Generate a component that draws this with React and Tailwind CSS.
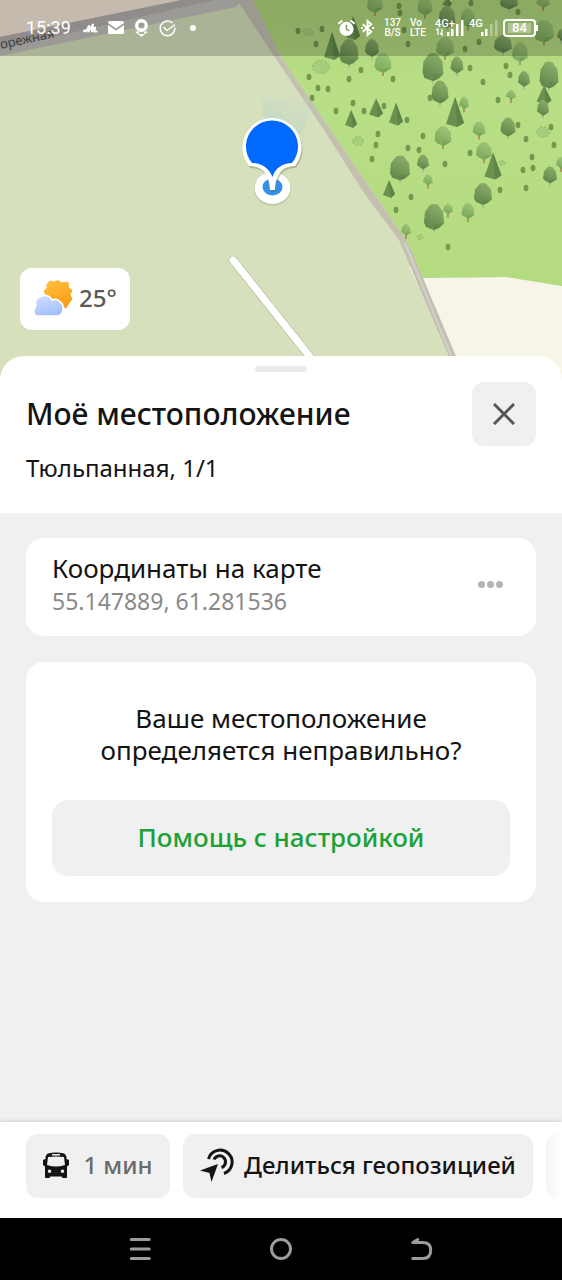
import React from 'react';

// x, y (centre), width, height, kind
const trees = [
  [375, 3, 16, 20, 'light'], [425, 6, 15, 19, 'light'], [447, 3, 10, 9, 'cone'], [447, 17, 17, 22, 'dark'],
  [468, 18, 15, 19, 'light'], [509, 1, 18, 17, 'dark'], [543, 1, 13, 14, 'light'], [544, 31, 20, 23, 'light'],
  [561, 35, 8, 12, 'dark'], [353, 28, 14, 24, 'cone'], [332, 46, 16, 28, 'cone'], [349, 52, 19, 26, 'dark'],
  [372, 48, 14, 18, 'dark'], [383, 63, 17, 20, 'light'], [445, 47, 18, 20, 'light'], [433, 67, 21, 28, 'dark'],
  [457, 65, 13, 17, 'dark'], [440, 92, 17, 23, 'dark'], [464, 103, 10, 13, 'light'], [455, 112, 18, 30, 'cone'],
  [503, 44, 18, 18, 'dark'], [520, 52, 16, 20, 'light'], [524, 79, 12, 16, 'dark'], [544, 95, 15, 19, 'cone'],
  [549, 75, 19, 27, 'dark'], [543, 108, 12, 16, 'dark'], [511, 95, 10, 10, 'light'], [508, 127, 15, 19, 'dark'],
  [479, 129, 13, 15, 'light'], [443, 136, 17, 20, 'light'], [376, 108, 14, 19, 'cone'], [351, 119, 12, 18, 'cone'],
  [396, 114, 14, 23, 'cone'], [484, 151, 16, 18, 'light'], [400, 168, 20, 25, 'dark'], [423, 162, 12, 15, 'dark'],
  [428, 180, 10, 11, 'light'], [389, 189, 12, 18, 'cone'], [493, 166, 17, 27, 'cone'], [550, 175, 14, 17, 'dark'],
  [561, 163, 10, 12, 'light'], [483, 194, 18, 22, 'dark'], [468, 211, 13, 16, 'light'], [448, 209, 10, 11, 'light'],
  [434, 217, 20, 26, 'dark'], [406, 230, 10, 12, 'light'],
];

const bushes = [
  [399, 6], [400, 13], [471, 3], [518, 12], [298, 31], [322, 29], [316, 44], [404, 30], [408, 44], [361, 70],
  [393, 79], [349, 79], [309, 77], [318, 88], [328, 89], [312, 98], [353, 103], [364, 111], [384, 106], [336, 111],
  [407, 120], [470, 68], [465, 49], [479, 42], [483, 82], [430, 98], [506, 66], [510, 75], [498, 100], [518, 125],
  [551, 127], [526, 139], [554, 145], [378, 134], [376, 145], [423, 136], [408, 148], [419, 150], [372, 159], [445, 164],
  [470, 153], [411, 197], [396, 210], [532, 157], [533, 168], [523, 170], [526, 188], [500, 190], [448, 247],
];

const scrubs = [[321, 67, 17], [308, 32, 9], [358, 141, 11], [543, 132, 13], [502, 163, 6], [420, 237, 6]];

const Tree = ({ x, y, w, h, kind }) => {
  const l = x - w / 2;
  const r = x + w / 2;
  const t = y - h / 2;
  const b = y + h / 2;
  if (kind === 'cone') {
    return (
      <g>
        <path d={`M${x} ${t}L${r} ${b - 4}L${x + 2} ${b}L${l} ${b - 3}Z`} fill="#6a9150" />
        <path d={`M${x} ${t}L${r} ${b - 4}L${x + 2} ${b}Z`} fill="#5e8548" />
      </g>
    );
  }
  return (
    <g>
      <path d={`M${x} ${b - 2}V${b + 3}`} stroke={kind === 'light' ? '#aa7448' : '#9fb895'} strokeWidth="1.3" />
      <path
        d={`M${x - w / 5} ${t + 1}Q${x} ${t - 1} ${x + w / 5} ${t + 1}L${r - 1} ${y - h / 5}L${r} ${y + h / 4}L${x + w / 4} ${b - 2}L${x} ${b}L${l + 2} ${b - 3}L${l} ${y + h / 5}L${l + 1} ${y - h / 5}Z`}
        fill={kind === 'light' ? 'url(#treeLight)' : 'url(#treeDark)'}
      />
      <path d={`M${x} ${y + h / 4}L${r} ${y + h / 4}L${x + w / 4} ${b - 2}L${x} ${b}Z`} fill="#3f6b32" opacity=".15" />
    </g>
  );
};

const MapView = () => (
  <svg className="block h-full w-full" viewBox="0 0 562 380" preserveAspectRatio="xMidYMin slice" aria-hidden="true">
    <defs>
      <linearGradient id="treeDark" x1=".7" y1="0" x2=".3" y2="1">
        <stop offset="0" stopColor="#8cb068" />
        <stop offset="1" stopColor="#5f844b" />
      </linearGradient>
      <linearGradient id="treeLight" x1=".7" y1="0" x2=".3" y2="1">
        <stop offset="0" stopColor="#9dc677" />
        <stop offset="1" stopColor="#7ba75c" />
      </linearGradient>
      <linearGradient id="beam" x1="0" y1="1" x2=".3" y2="0">
        <stop offset="0" stopColor="#6db3de" stopOpacity=".75" />
        <stop offset="1" stopColor="#a9d0d4" stopOpacity=".1" />
      </linearGradient>
      <linearGradient id="meadow" x1="0" y1="0" x2="0" y2="1">
        <stop offset="0" stopColor="#aed479" />
        <stop offset=".3" stopColor="#b9df86" />
        <stop offset="1" stopColor="#b4db80" />
      </linearGradient>
      <clipPath id="wood">
        <path d="M252 0L281 57L344 150L408 243L420 278L506 277L562 286V0Z" />
      </clipPath>
    </defs>
    <rect width="562" height="380" fill="#d6e0bd" />
    <path d="M0 0H182L0 38Z" fill="#f5eada" />
    <path d="M0 37L182 0H241L236 7L0 56Z" fill="#c3c1bd" />
    <path d="M0 37L182 0H215L0 49Z" fill="#b3b0ae" />
    <text x="1" y="49" transform="rotate(-12 1 49)" fontFamily="Noto Sans, sans-serif" fontSize="13" fill="#555351">
      орежная
    </text>
    <path d="M408 265L420 278L506 277L562 286V380H466Z" fill="#f7f4e8" />
    <path d="M252 0L281 57L344 150L408 243L420 278L506 277L562 286V0Z" fill="url(#meadow)" />
    <g clipPath="url(#wood)">
      {bushes.map(([x, y]) => (
        <ellipse key={`${x}-${y}`} cx={x} cy={y} rx="2.4" ry="3.2" fill="#73994f" />
      ))}
      {scrubs.map(([x, y, w]) => (
        <ellipse key={`${x}-${y}`} cx={x} cy={y} rx={w / 2} ry={w * 0.4} fill="#a6cd7c" stroke="#8fb668" strokeDasharray="2 2" />
      ))}
      {trees.map(([x, y, w, h, kind]) => (
        <Tree key={`${x}-${y}`} x={x} y={y} w={w} h={h} kind={kind} />
      ))}
    </g>
    <path d="M237 0H253L281 57L344 150L408 243L423 278L466 380H459L399 240L364 193L324 130L276 59Z" fill="#c3c0b2" />
    <path d="M405 243L461 380" stroke="#d4d0c9" strokeWidth="2" fill="none" />
    <path d="M233 260L326 377" stroke="#c2caae" strokeWidth="9" strokeLinecap="round" />
    <path d="M233 260L326 377" stroke="#fff" strokeWidth="7" strokeLinecap="round" />

    {/* Current position and pin */}
    <path d="M272 188L262 98L318 102Z" fill="url(#beam)" />
    <ellipse cx="272.5" cy="189" rx="18.5" ry="16.5" fill="#8b967466" />
    <ellipse cx="272.5" cy="188" rx="18" ry="16" fill="#fff" />
    <ellipse cx="272.5" cy="187" rx="10" ry="8.500" fill="#3190e8" />
    <path d="M249 166A29.5 29.5 0 1 1 295 166C284 166 276 172 275 190H270C269 172 261 166 249 166Z" fill="#5d6b4455" transform="translate(1 2)" />
    <path d="M249 166A29.5 29.5 0 1 1 295 166C284 166 276 172 275 190H270C269 172 261 166 249 166Z" fill="#fff" />
    <path d="M252 163A26 26 0 1 1 292 163C283 163 275 168 272.5 177C269 168 261 163 252 163Z" fill="#0069ff" />
  </svg>
);

const Signal = ({ label, faded, arrows }) => (
  <svg width="29" height="20" viewBox="0 0 29 20" fill="#fff" aria-hidden="true">
    <text x="0" y="9" fontFamily="Roboto, sans-serif" fontWeight="500" fontSize="11">{label}</text>
    {arrows && <path d="M1 12L3 11V17M7 11V17L5 15" stroke="#fff" strokeWidth="1.3" fill="none" />}
    <rect x="12" y="14" width="2.5" height="4" />
    <rect x="16" y="11" width="2.5" height="7" />
    <rect x="21" y="6" width="2.5" height="12" opacity={faded ? 0.35 : 1} />
    <rect x="26" y="2" width="2.5" height="16" opacity={faded ? 0.35 : 1} />
  </svg>
);

const StatusBar = () => (
  <header className="absolute inset-x-0 top-0 flex h-14 items-center justify-between bg-black/20 pr-6 pl-[26px] font-['Roboto',sans-serif] text-white">
    <div className="flex items-center gap-[10px]">
      <time className="mr-[2px] text-lg leading-6">15:39</time>
      <svg width="15" height="16" viewBox="0 0 15 16" fill="none" stroke="#fff" strokeLinecap="round" strokeLinejoin="round" aria-hidden="true">
        <path d="M1 11L2 10.500M3 11.500L6 6L5.500 11.500L10 4.500L9 11.500L12 7.500L11.500 11.500H13.500" strokeWidth="2" />
      </svg>
      <svg width="16" height="14" viewBox="0 0 16 14" aria-hidden="true">
        <path d="M1.5 0H14.5Q16 0 16 1.5V2L8 7.5L0 2V1.5Q0 0 1.5 0ZM0 4L8 9.5L16 4V11.5Q16 13 14.5 13H1.5Q0 13 0 11.5Z" fill="#fff" />
      </svg>
      <svg width="15" height="18" viewBox="0 0 15 18" aria-hidden="true">
        <circle cx="7.500" cy="6.500" r="4.800" fill="none" stroke="#fff" strokeWidth="3.400" />
        <path d="M1 13L4 12L5.500 16ZM14 13L11 12L9.500 16ZM4 15H11L7.500 18Z" fill="#fff" />
      </svg>
      <svg width="17" height="17" viewBox="0 0 17 17" fill="none" stroke="#fff" strokeWidth="1.5" strokeLinecap="round" strokeLinejoin="round" aria-hidden="true">
        <path d="M13 2.600A7.300 7.300 0 1 0 15.800 8" />
        <path d="M5 7.500L8 10.500L15.500 5" />
      </svg>
      <span className="ml-1 size-[6px] rounded-full bg-white" />
    </div>
    <div className="flex items-center gap-[5px] text-[10px] leading-[10px] font-medium">
      <svg width="17" height="18" viewBox="0 0 18 18" aria-hidden="true">
        <path d="M1 4L4 1.5M17 4L14 1.5" stroke="#fff" strokeWidth="2" strokeLinecap="round" />
        <circle cx="9" cy="10" r="7.500" fill="#fff" />
        <path d="M9 5.500V10.500L12 12" stroke="#7d9e57" strokeWidth="1.500" fill="none" />
      </svg>
      <svg width="15" height="18" viewBox="0 0 16 18" fill="none" stroke="#fff" strokeWidth="2" aria-hidden="true">
        <path d="M3 5L12 13L8 16.500V1.500L12 5L3 13" />
        <path d="M1 9H3M13 9H15" />
      </svg>
      <span className="ml-1 text-center">137<br />B/S</span>
      <span className="mx-1">Vo<br />LTE</span>
      <Signal label="4G+" arrows />
      <Signal label="4G" faded />
      <span className="flex items-center">
        <span className="flex h-[18px] w-[33px] items-center justify-center rounded-[4px] border-2 border-white text-[13px]">
          <span className="bg-white/30 px-1">84</span>
        </span>
        <span className="h-[6px] w-[2px] bg-white" />
      </span>
    </div>
  </header>
);

const WeatherIcon = () => (
  <svg width="40" height="38" viewBox="0 0 40 38" aria-hidden="true">
    <defs>
      <linearGradient id="sun" x1="0" y1="0" x2=".5" y2="1">
        <stop offset="0" stopColor="#ffc23c" />
        <stop offset="1" stopColor="#fa9f1c" />
      </linearGradient>
      <linearGradient id="cloud" x1="0" y1="0" x2=".3" y2="1">
        <stop offset="0" stopColor="#d2e1ff" />
        <stop offset="1" stopColor="#a4c1fa" />
      </linearGradient>
    </defs>
    <path d="M17 2L21 3L25 1.500L29 4L35 3L35.500 9L39 11L37 16L39 20L36 24L33 29L27 25L20 27L14 22L13 16L11 12L14 9L14 5Z" fill="url(#sun)" stroke="url(#sun)" strokeLinejoin="round" />
    <path
      d="M4 37Q0 36 1 31Q2 29 3 27Q1 19 9 17Q16 15 19 21Q24 19 27 23Q31 25 30 31Q29 37 24 37Z"
      fill="url(#cloud)"
      stroke="#fff"
      strokeWidth="1.5"
    />
  </svg>
);

const BusIcon = () => (
  <svg width="26" height="26" viewBox="0 0 26 26" aria-hidden="true">
    <path
      fillRule="evenodd"
      d="M5 1.500Q13-.5 21 1.500Q23 2 23.500 5V7L26 8V13L24 14.500V25Q24 26 23 26H20Q19 26 19 24.500H7Q7 26 6 26H3Q2 26 2 25V14.500L0 13V8L2.500 7V5Q3 2 5 1.500ZM5 5L4 13Q13 16 22 13L21 5Q13 4 5 5ZM9 2V3.500H17V2ZM6.500 17.500A1.700 1.700 0 1 0 6.500 21A1.700 1.700 0 1 0 6.500 17.500ZM19.500 17.500A1.700 1.700 0 1 0 19.500 21A1.700 1.700 0 1 0 19.500 17.500Z"
      fill="#141414"
    />
  </svg>
);

const ShareGeoIcon = () => (
  <svg width="34" height="34" viewBox="0 0 34 34" fill="none" stroke="#141414" strokeWidth="3" aria-hidden="true">
    <path d="M8.500 11A12 12 0 1 1 24 25.500" />
    <path d="M14 11.500A6 6 0 1 1 21.500 19.500" />
    <path d="M0 22.500L18 16L11.500 34L9.500 25Z" fill="#141414" stroke="none" />
  </svg>
);

const App = () => {
  return (
    <div className="flex min-h-screen flex-col bg-[#f0f0f0] font-['Noto_Sans',sans-serif] text-[#141414]">
      {/* Map */}
      <div className="relative h-[380px] shrink-0 overflow-hidden">
        <MapView />
        <StatusBar />
        <div className="absolute bottom-[50px] left-5 flex h-[62px] items-center gap-[6px] rounded-xl bg-white px-[13px] pb-[2px] text-2xl leading-8 font-medium text-[#5a5a5a]">
          <WeatherIcon />
          <span>25°</span>
        </div>
      </div>

      {/* Sheet */}
      <main className="relative -mt-6 flex-1">
        <section className="rounded-t-3xl bg-white px-[26px] pt-[10px] pb-[29px]">
          <div className="mx-auto h-[6px] w-[52px] rounded-full bg-[#ebebeb]" />
          <div className="mt-[10px] flex items-center justify-between">
            <h1 className="text-3xl leading-9 font-medium">Моё местоположение</h1>
            <button aria-label="Закрыть" className="flex size-16 shrink-0 items-center justify-center rounded-xl bg-[#f0f0f0]">
              <svg width="22" height="22" viewBox="0 0 22 22" stroke="#555" strokeWidth="3" aria-hidden="true">
                <path d="M1 1L21 21M21 1L1 21" />
              </svg>
            </button>
          </div>
          <p className="mt-[6px] text-2xl leading-8">Тюльпанная, 1/1</p>
        </section>

        <div className="flex flex-col gap-[26px] px-[26px] py-[25px]">
          <section className="flex items-center justify-between rounded-[18px] bg-white px-[26px] pt-[13px] pb-[19px]">
            <div>
              <h2 className="text-[26px] leading-[34px]">Координаты на карте</h2>
              <p className="text-[23px] leading-8 text-[#898989]">55.147889, 61.281536</p>
            </div>
            <button aria-label="Ещё" className="flex h-8 w-8 items-center gap-[2px]">
              <span className="size-[7px] rounded-full bg-[#b4b4b4]" />
              <span className="size-[7px] rounded-full bg-[#b4b4b4]" />
              <span className="size-[7px] rounded-full bg-[#b4b4b4]" />
            </button>
          </section>

          <section className="rounded-[18px] bg-white px-[26px] pt-10 pb-[26px] text-center">
            <p className="text-[26px] leading-8">
              Ваше местоположение<br />определяется неправильно?
            </p>
            <button className="mt-[34px] h-[76px] w-full rounded-2xl bg-[#f0f0f0] pb-[2px] text-[26px] leading-8 font-medium text-[#1ba136]">
              Помощь с настройкой
            </button>
          </section>
        </div>
      </main>

      {/* Quick actions */}
      <div className="flex h-24 shrink-0 gap-[13px] overflow-hidden bg-white pt-3 pl-[26px] shadow-[0_-1px_4px_rgba(0,0,0,0.12)]">
        <button className="flex h-16 w-36 shrink-0 items-center justify-center gap-[14px] rounded-xl bg-[#f0f0f0] pb-[2px] text-2xl leading-8 font-medium text-[#6b6b6b]">
          <BusIcon />
          1 мин
        </button>
        <button className="flex h-16 w-[350px] shrink-0 items-center justify-center gap-[10px] rounded-xl bg-[#f0f0f0] pb-[2px] text-2xl leading-8 font-medium whitespace-nowrap">
          <ShareGeoIcon />
          Делиться геопозицией
        </button>
        <div className="h-16 min-w-4 flex-1 rounded-l-xl bg-linear-to-r from-[#f4f4f4] to-white" />
      </div>

      {/* System navigation */}
      <nav className="grid h-[62px] shrink-0 grid-cols-4 bg-black">
        <button aria-label="Недавние" className="flex translate-x-1/2 items-center justify-center">
          <svg width="22" height="24" viewBox="0 0 22 24" stroke="#9c9c9c" strokeWidth="3" strokeLinecap="round" aria-hidden="true">
            <path d="M2 2.500H20M2 12H20M2 21.500H20" />
          </svg>
        </button>
        <button aria-label="Домой" className="col-span-2 flex items-center justify-center">
          <span className="size-[22px] rounded-full border-[3px] border-[#9c9c9c]" />
        </button>
        <button aria-label="Назад" className="flex -translate-x-1/2 items-center justify-center">
          <svg width="22" height="24" viewBox="0 0 22 24" fill="none" stroke="#9c9c9c" strokeWidth="3" strokeLinecap="round" strokeLinejoin="round" aria-hidden="true">
            <path d="M7 2.500L2 5.500H12Q20 5.500 20 13Q20 21.500 12 21.500H2" />
          </svg>
        </button>
      </nav>
    </div>
  );
};

export default App;
